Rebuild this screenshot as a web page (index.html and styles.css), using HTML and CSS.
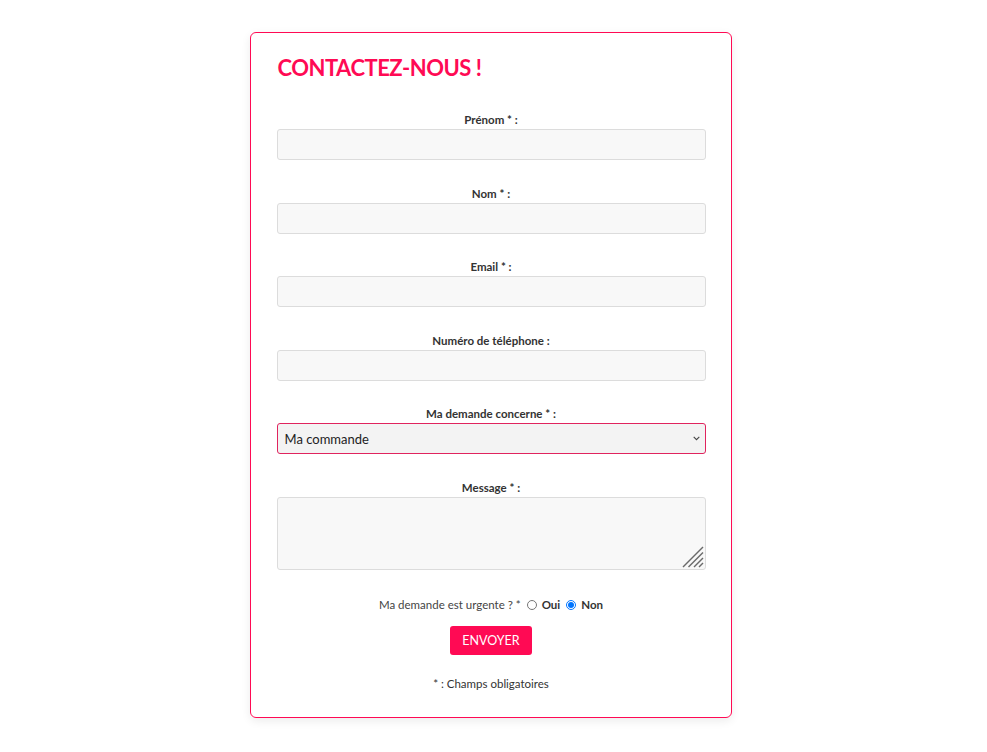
FILE: index.html
```
<!DOCTYPE html>
<html lang="fr">
<head>
<meta charset="utf-8">
<title>Contactez-nous</title>
<link rel="stylesheet" href="styles.css">
</head>
<body>
<div class="page">
  <form class="card">
    <h1 class="title">CONTACTEZ-NOUS !</h1>
    <div class="field">
      <label class="label" for="prenom">Prénom * :</label>
      <input class="input" id="prenom" type="text">
    </div>
    <div class="field">
      <label class="label" for="nom">Nom * :</label>
      <input class="input" id="nom" type="text">
    </div>
    <div class="field">
      <label class="label" for="email">Email * :</label>
      <input class="input" id="email" type="email">
    </div>
    <div class="field">
      <label class="label" for="tel">Numéro de téléphone :</label>
      <input class="input" id="tel" type="tel">
    </div>
    <div class="field">
      <label class="label" for="demande">Ma demande concerne * :</label>
      <div class="control">
        <select class="select" id="demande">
          <option>Ma commande</option>
        </select>
        <svg class="chevron" width="7" height="5" viewBox="0 0 7 5" aria-hidden="true"><path d="M0.7 0.8 L3.5 3.6 L6.3 0.8" fill="none" stroke="#444" stroke-width="1.1"/></svg>
      </div>
    </div>
    <div class="field field-last">
      <label class="label" for="message">Message * :</label>
      <div class="control">
        <textarea class="textarea" id="message"></textarea>
        <svg class="grip" width="22" height="22" viewBox="0 0 22 22" aria-hidden="true">
          <g stroke="#6a6a6a" stroke-width="1.5">
            <path d="M1 21 L21 1"/>
            <path d="M6.5 21 L21 6.5"/>
            <path d="M12 21 L21 12"/>
            <path d="M17 21 L21 17"/>
          </g>
        </svg>
      </div>
    </div>
    <div class="urgent">
      <span>Ma demande est urgente ? *</span>
      <input class="radio" type="radio" name="urgent" id="oui">
      <label class="radio-label" for="oui">Oui</label>
      <input class="radio" type="radio" name="urgent" id="non" checked>
      <label class="radio-label" for="non">Non</label>
    </div>
    <div class="actions">
      <button class="button" type="button">ENVOYER</button>
    </div>
    <p class="note">* : Champs obligatoires</p>
  </form>
</div>
</body>
</html>
```
FILE: styles.css
```
* { box-sizing: border-box; }
body {
  margin: 0;
  background: #fff;
  font-family: Lato, "Open Sans", sans-serif;
  color: #333;
}
.page {
  display: flex;
  justify-content: center;
  padding: 32px 6px 30px 0;
}
.card {
  width: 482px;
  border: 1px solid #ff0a54;
  border-radius: 6px;
  box-shadow: 0 3px 10px rgba(0,0,0,0.08);
  padding: 20px 25px 26px 26px;
  display: flex;
  flex-direction: column;
}
.title {
  margin: 0 0 30px 1px;
  font-size: 22px;
  letter-spacing: -0.5px;
  line-height: 30px;
  font-weight: 700;
  color: #ff0a54;
}
.field {
  display: flex;
  flex-direction: column;
  align-items: center;
  margin-bottom: 26.5px;
}
.field-last {
  margin-bottom: 28px;
}
.label {
  font-size: 11.5px;
  font-weight: 700;
  line-height: 14px;
  margin-bottom: 2px;
  color: #333;
}
.control {
  position: relative;
  width: 100%;
  display: flex;
}
.input, .select, .textarea {
  width: 100%;
  height: 31px;
  border: 1px solid #dcdcdc;
  border-radius: 3px;
  background: #f8f8f8;
  font-family: inherit;
  font-size: 13px;
  color: #222;
}
.select {
  appearance: none;
  -webkit-appearance: none;
  border-color: #e0245e;
  background: #f3f3f3;
  padding: 0 7px;
  color: #222;
}
.chevron {
  position: absolute;
  right: 6px;
  top: 13px;
  pointer-events: none;
}
.textarea {
  height: 73px;
  resize: none;
  display: block;
}
.grip {
  position: absolute;
  right: 2px;
  bottom: 2px;
  pointer-events: none;
}
.urgent {
  display: flex;
  justify-content: center;
  align-items: center;
  font-size: 11.5px;
  line-height: 14px;
  color: #444;
}
.radio {
  width: 10px;
  height: 10px;
  margin: 0 5px 0 6px;
}
.radio-label {
  font-weight: 700;
  color: #333;
}
.actions {
  display: flex;
  justify-content: center;
  margin-top: 14px;
}
.button {
  width: 82px;
  height: 29px;
  border: none;
  border-radius: 3px;
  background: #ff0a54;
  color: #fff;
  font-family: inherit;
  font-size: 12.5px;
}
.note {
  text-align: center;
  font-size: 11.5px;
  line-height: 14px;
  margin: 22px 0 0;
  color: #333;
}
```
